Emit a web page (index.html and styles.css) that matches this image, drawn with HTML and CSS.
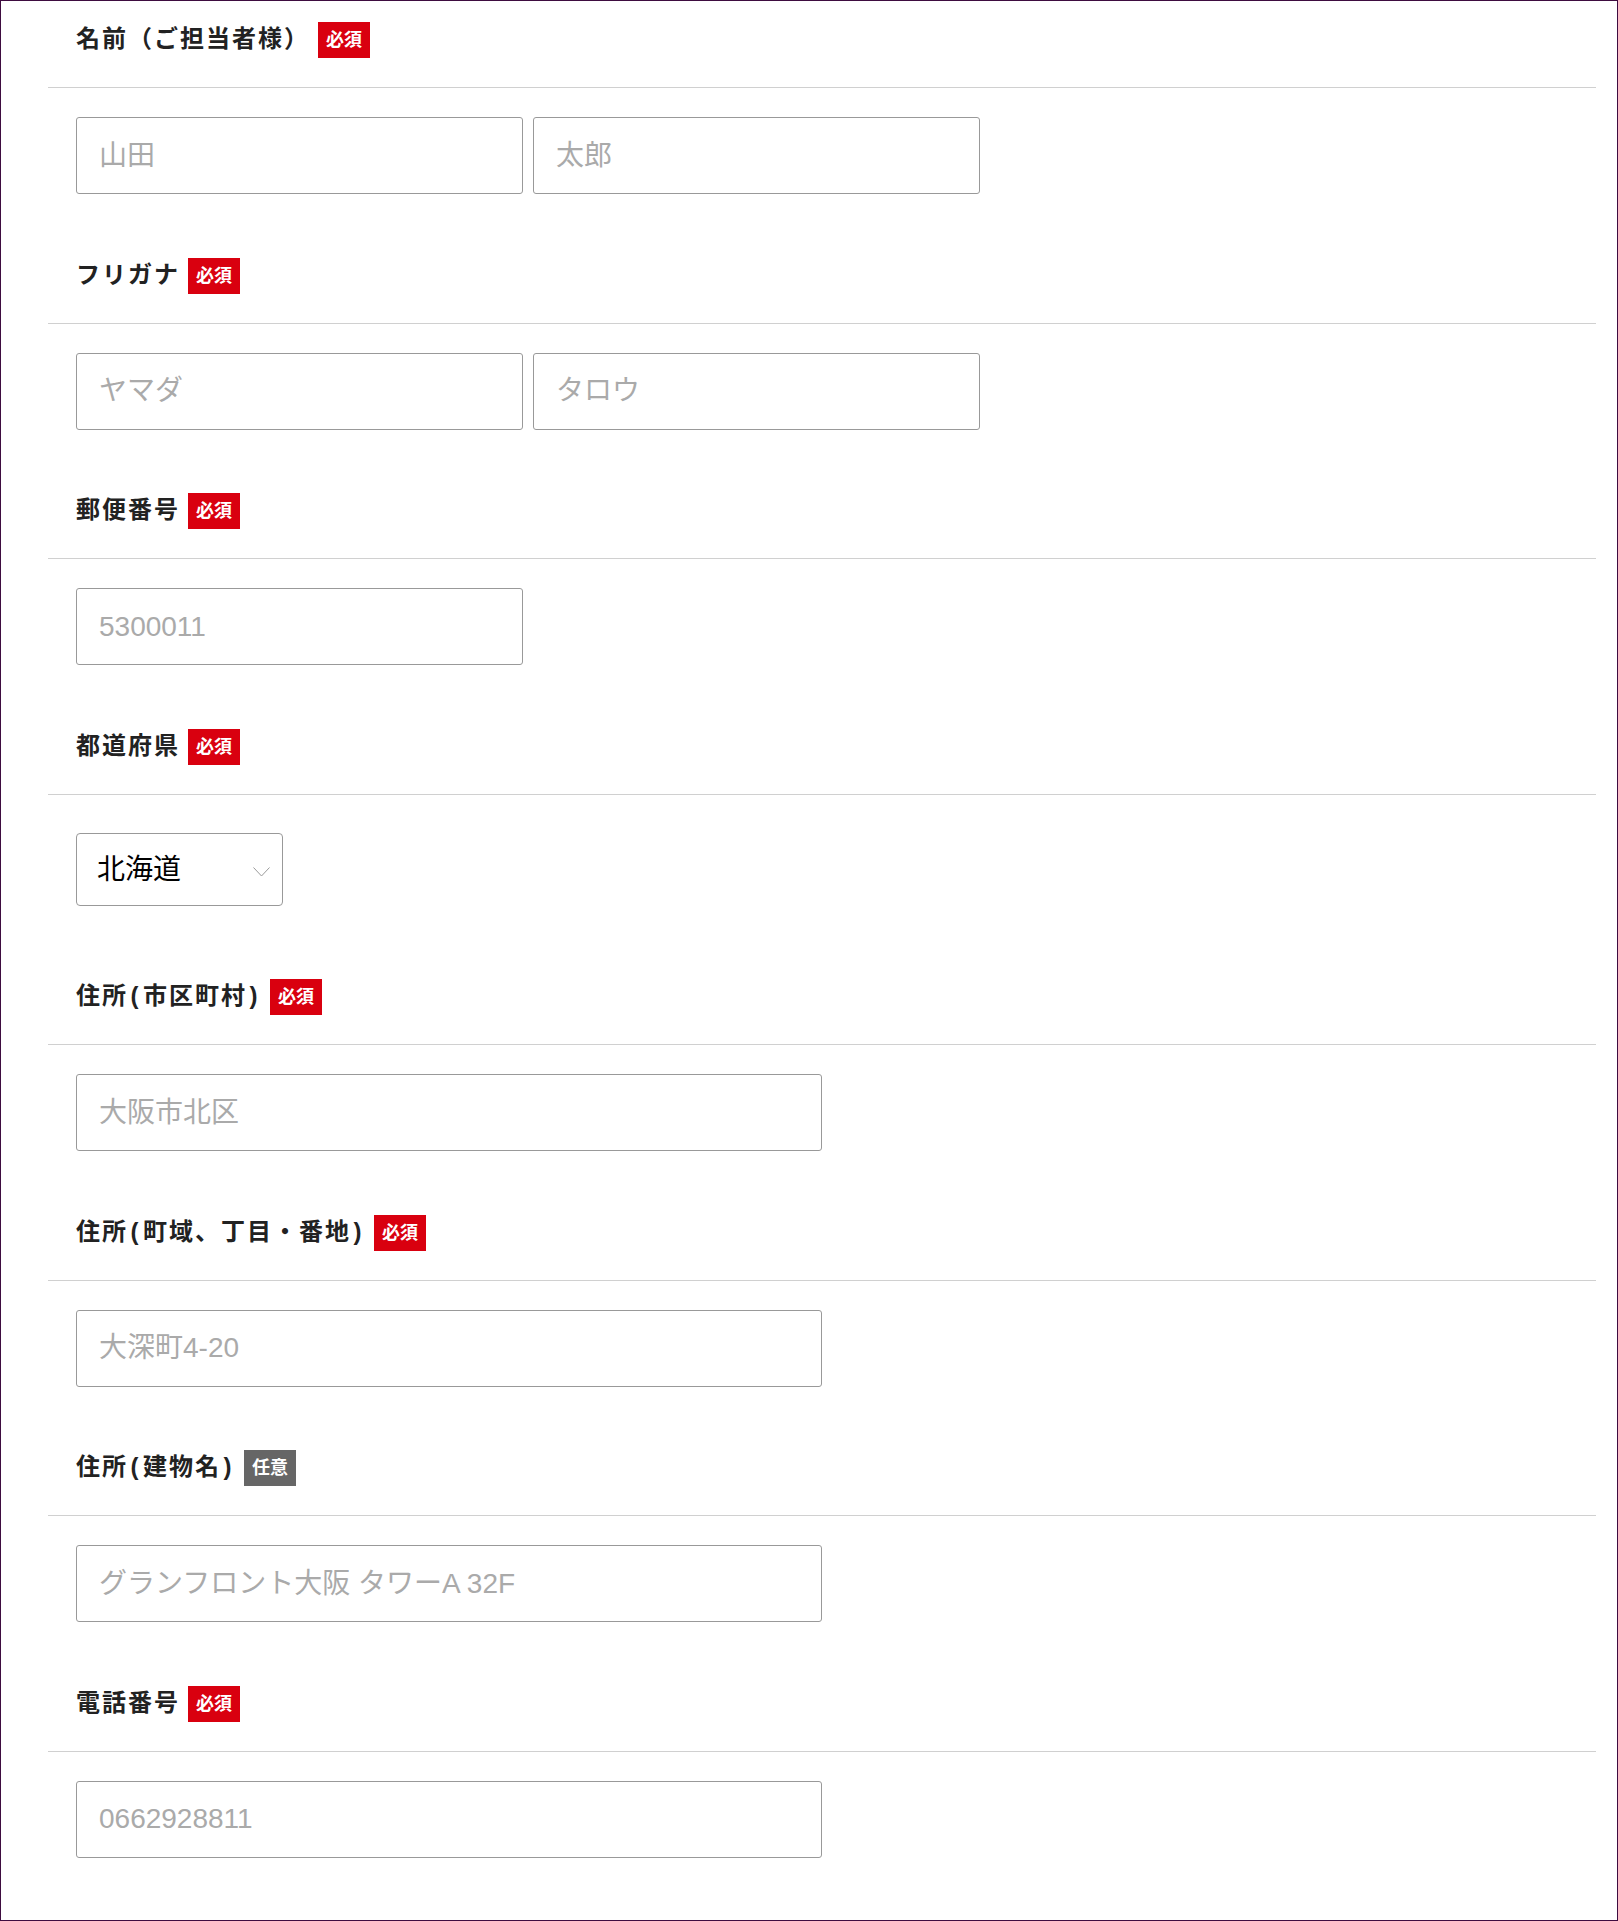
FILE: index.html
```html
<!DOCTYPE html>
<html lang="ja">
<head>
	<meta charset="utf-8">
	<meta name="viewport" content="width=device-width"/>
	<link rel="stylesheet" href="styles.css">
</head>
<body>
<div class="page">
	<form class="form">
		<div class="field">
			<div class="field-head">
				<span class="label">名前（ご担当者様）</span>
				<span class="badge">必須</span>
			</div>
			<div class="field-body">
				<div class="pair">
					<input type="text" class="input half" placeholder="山田">
					<input type="text" class="input half" placeholder="太郎">
				</div>
			</div>
		</div>

		<div class="field">
			<div class="field-head">
				<span class="label">フリガナ</span>
				<span class="badge">必須</span>
			</div>
			<div class="field-body">
				<div class="pair">
					<input type="text" class="input half" placeholder="ヤマダ">
					<input type="text" class="input half" placeholder="タロウ">
				</div>
			</div>
		</div>

		<div class="field">
			<div class="field-head">
				<span class="label">郵便番号</span>
				<span class="badge">必須</span>
			</div>
			<div class="field-body">
				<input type="text" class="input half" placeholder="5300011">
			</div>
		</div>

		<div class="field">
			<div class="field-head">
				<span class="label">都道府県</span>
				<span class="badge">必須</span>
			</div>
			<div class="field-body">
				<div class="select-wrap">
					<select class="select">
						<option>北海道</option>
						<option>青森県</option>
						<option>岩手県</option>
						<option>宮城県</option>
						<option>大阪府</option>
					</select>
					<svg class="chevron" viewBox="0 0 17 10" width="17" height="10">
						<polyline points="0.5,0.5 8.5,9 16.5,0.5" fill="none" stroke="#999" stroke-width="1"/>
					</svg>
				</div>
			</div>
		</div>

		<div class="field">
			<div class="field-head">
				<span class="label">住所<span class="paren">(</span>市区町村<span class="paren">)</span></span>
				<span class="badge">必須</span>
			</div>
			<div class="field-body">
				<input type="text" class="input wide" placeholder="大阪市北区">
			</div>
		</div>

		<div class="field">
			<div class="field-head">
				<span class="label">住所<span class="paren">(</span>町域、丁目・番地<span class="paren">)</span></span>
				<span class="badge">必須</span>
			</div>
			<div class="field-body">
				<input type="text" class="input wide" placeholder="大深町4-20">
			</div>
		</div>

		<div class="field">
			<div class="field-head">
				<span class="label">住所<span class="paren">(</span>建物名<span class="paren">)</span></span>
				<span class="badge any">任意</span>
			</div>
			<div class="field-body">
				<input type="text" class="input wide" placeholder="グランフロント大阪 タワーA 32F">
			</div>
		</div>

		<div class="field">
			<div class="field-head">
				<span class="label">電話番号</span>
				<span class="badge">必須</span>
			</div>
			<div class="field-body">
				<input type="tel" class="input wide" placeholder="0662928811">
			</div>
		</div>
	</form>
</div>
</body>
</html>
```

FILE: styles.css
```css
* {
	padding: 0;
	margin: 0;
	box-sizing: border-box;
}

body {
	font-family: "Liberation Sans", "Noto Sans CJK JP", sans-serif;
	color: #222;
	background: #fff;
}

.page {
	min-height: 1921px;
	border: 1px solid #3e0c40;
	padding: 0 21px 0 47px;
}

.field-head {
	display: flex;
	align-items: center;
	height: 87px;
	padding: 21px 0 29px 28px;
	border-bottom: 1px solid #d0d0d0;
}

.label {
	font-size: 24px;
	font-weight: bold;
	letter-spacing: 2px;
	line-height: 33px;
	margin-bottom: 3px;
	color: #222;
}

.paren {
	margin: 0 2.5px;
}

.badge {
	display: inline-block;
	height: 36px;
	line-height: 36px;
	padding: 0 8px;
	margin-left: 8px;
	background: #d9000f;
	color: #fff;
	font-size: 18px;
	font-weight: bold;
}

.badge.any {
	background: #666;
}

.field-body {
	padding: 29px 0 42.5px 28px;
}

.pair {
	display: flex;
	gap: 10px;
}

.input {
	display: block;
	height: 77px;
	border: 1px solid #999;
	border-radius: 3px;
	padding: 0 22px;
	font-family: "Liberation Sans", "Noto Sans CJK JP", sans-serif;
	font-size: 28px;
	color: #222;
	background: #fff;
	outline: none;
}

.input::placeholder {
	color: #aaa;
}

.half {
	width: 447px;
}

.wide {
	width: 746px;
}

.select-wrap {
	position: relative;
	display: inline-block;
	margin: 9.5px 0;
}

.select {
	display: block;
	width: 207px;
	height: 73px;
	border: 1px solid #999;
	border-radius: 4px;
	padding: 0 20px;
	font-family: "Liberation Sans", "Noto Sans CJK JP", sans-serif;
	font-size: 28px;
	color: #000;
	background: #fff;
	-webkit-appearance: none;
	appearance: none;
	outline: none;
}

.chevron {
	position: absolute;
	right: 13px;
	top: 34px;
	pointer-events: none;
}
```
